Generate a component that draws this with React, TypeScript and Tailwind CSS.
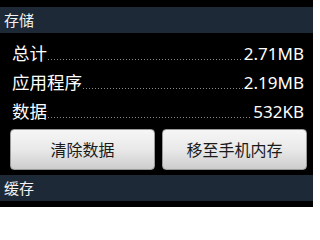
import React from 'react';

const rows = [
  { label: '总计', value: '2.71MB' },
  { label: '应用程序', value: '2.19MB' },
  { label: '数据', value: '532KB' },
];

function SectionHeader({ title, className }: { title: string; className?: string }) {
  return (
    <div
      className={`h-[26px] bg-[#1d2937] px-[4px] flex items-center text-[15px] text-[#f2f2f2] ${className ?? ''}`}
    >
      {title}
    </div>
  );
}

function GrayButton({ label }: { label: string }) {
  return (
    <button className="flex-1 h-[41px] rounded-[4px] bg-gradient-to-b from-[#f6f6f6] via-[#e9e9e9] to-[#cdcdcd] border border-[#9a9a9a] text-[16px] text-[#1a1a1a] flex items-center justify-center">
      {label}
    </button>
  );
}

export default function App() {
  return (
    <div
      className="w-[313px] h-[207px] bg-black overflow-hidden pt-[7px]"
      style={{ fontFamily: '"Noto Sans", "Noto Sans CJK SC", sans-serif' }}
    >
      <SectionHeader title="存储" />

      <div className="mt-[6px] pl-[12px] pr-[9px]">
        {rows.map((row) => (
          <div key={row.label} className="h-[29px] flex items-center text-white">
            <span className="text-[17.5px] leading-none">{row.label}</span>
            <span className="flex-1 self-end mb-[8px] mx-[1px] h-px bg-[linear-gradient(to_right,#8a8a8a_1px,transparent_1px)] bg-[length:3px_1px] bg-repeat-x" />
            <span className="text-[17px] leading-none">{row.value}</span>
          </div>
        ))}
      </div>

      <div className="mt-[3px] pl-[10px] pr-[6px] flex gap-[7px]">
        <GrayButton label="清除数据" />
        <GrayButton label="移至手机内存" />
      </div>

      <SectionHeader title="缓存" className="mt-[5px]" />
    </div>
  );
}
